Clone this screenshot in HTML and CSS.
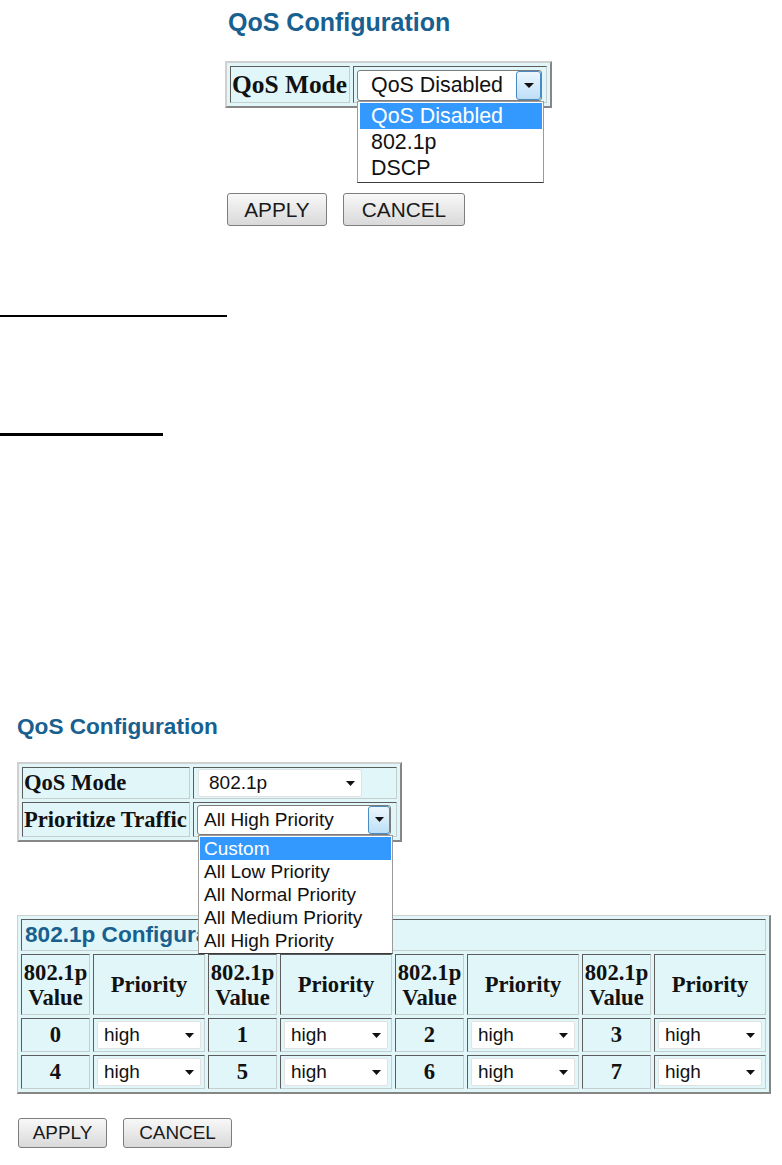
FILE: index.html
```
<!DOCTYPE html>
<html>
<head>
<meta charset="utf-8">
<title>QoS Configuration</title>
<link rel="stylesheet" href="styles.css">
</head>
<body>
<div class="page">
  <section class="shot shot-top">
    <h2 class="title title-lg">QoS Configuration</h2>
    <table class="cfg cfg-top">
      <tr>
        <td class="lbl lbl-lg c-mode">QoS Mode</td>
        <td class="val c-modeval">
          <div class="sel sel-open sel-lg">
            <span class="sel-text">QoS Disabled</span>
            <span class="sel-btn sel-btn-lg"><svg width="10" height="5" viewBox="0 0 10 5"><path d="M0 0h10L5 5z" fill="#111"/></svg></span>
            <ul class="list list-lg">
              <li class="hl">QoS Disabled</li>
              <li>802.1p</li>
              <li>DSCP</li>
            </ul>
          </div>
        </td>
      </tr>
    </table>
    <div class="btns btns-lg">
      <button class="btn b-apply-lg">APPLY</button>
      <button class="btn b-cancel-lg">CANCEL</button>
    </div>
  </section>

  <div class="rule rule-1"></div>
  <div class="rule rule-2"></div>

  <section class="shot shot-bottom">
    <h2 class="title title-md">QoS Configuration</h2>
    <table class="cfg cfg-mid">
      <tr>
        <td class="lbl lbl-md c-l1">QoS Mode</td>
        <td class="val c-v1">
          <div class="sel sel-closed sel-mode">
            <span class="sel-text">802.1p</span>
            <span class="arrow"><svg width="9" height="5" viewBox="0 0 9 5"><path d="M0 0h9L4.5 5z" fill="#111"/></svg></span>
          </div>
        </td>
      </tr>
      <tr>
        <td class="lbl lbl-md c-l2">Prioritize Traffic</td>
        <td class="val c-v2">
          <div class="sel sel-open sel-prio">
            <span class="sel-text">All High Priority</span>
            <span class="sel-btn sel-btn-md"><svg width="9" height="5" viewBox="0 0 9 5"><path d="M0 0h9L4.5 5z" fill="#111"/></svg></span>
            <ul class="list list-md">
              <li class="hl">Custom</li>
              <li>All Low Priority</li>
              <li>All Normal Priority</li>
              <li>All Medium Priority</li>
              <li>All High Priority</li>
            </ul>
          </div>
        </td>
      </tr>
    </table>

    <table class="cfg cfg-data">
      <tr>
        <td class="cap" colspan="8"><span class="cap-text">802.1p Configuration</span></td>
      </tr>
      <tr class="hdr">
        <td class="th c-num">802.1p<br>Value</td>
        <td class="th c-pri">Priority</td>
        <td class="th c-num">802.1p<br>Value</td>
        <td class="th c-pri">Priority</td>
        <td class="th c-num">802.1p<br>Value</td>
        <td class="th c-pri">Priority</td>
        <td class="th c-num">802.1p<br>Value</td>
        <td class="th c-pri">Priority</td>
      </tr>
      <tr class="drow">
        <td class="num">0</td>
        <td class="pri"><div class="sel sel-closed sel-high"><span class="sel-text">high</span><span class="arrow"><svg width="9" height="5" viewBox="0 0 9 5"><path d="M0 0h9L4.5 5z" fill="#111"/></svg></span></div></td>
        <td class="num">1</td>
        <td class="pri"><div class="sel sel-closed sel-high"><span class="sel-text">high</span><span class="arrow"><svg width="9" height="5" viewBox="0 0 9 5"><path d="M0 0h9L4.5 5z" fill="#111"/></svg></span></div></td>
        <td class="num">2</td>
        <td class="pri"><div class="sel sel-closed sel-high"><span class="sel-text">high</span><span class="arrow"><svg width="9" height="5" viewBox="0 0 9 5"><path d="M0 0h9L4.5 5z" fill="#111"/></svg></span></div></td>
        <td class="num">3</td>
        <td class="pri"><div class="sel sel-closed sel-high"><span class="sel-text">high</span><span class="arrow"><svg width="9" height="5" viewBox="0 0 9 5"><path d="M0 0h9L4.5 5z" fill="#111"/></svg></span></div></td>
      </tr>
      <tr class="drow">
        <td class="num">4</td>
        <td class="pri"><div class="sel sel-closed sel-high"><span class="sel-text">high</span><span class="arrow"><svg width="9" height="5" viewBox="0 0 9 5"><path d="M0 0h9L4.5 5z" fill="#111"/></svg></span></div></td>
        <td class="num">5</td>
        <td class="pri"><div class="sel sel-closed sel-high"><span class="sel-text">high</span><span class="arrow"><svg width="9" height="5" viewBox="0 0 9 5"><path d="M0 0h9L4.5 5z" fill="#111"/></svg></span></div></td>
        <td class="num">6</td>
        <td class="pri"><div class="sel sel-closed sel-high"><span class="sel-text">high</span><span class="arrow"><svg width="9" height="5" viewBox="0 0 9 5"><path d="M0 0h9L4.5 5z" fill="#111"/></svg></span></div></td>
        <td class="num">7</td>
        <td class="pri"><div class="sel sel-closed sel-high"><span class="sel-text">high</span><span class="arrow"><svg width="9" height="5" viewBox="0 0 9 5"><path d="M0 0h9L4.5 5z" fill="#111"/></svg></span></div></td>
      </tr>
    </table>

    <div class="btns btns-md">
      <button class="btn b-apply-md">APPLY</button>
      <button class="btn b-cancel-md">CANCEL</button>
    </div>
  </section>
</div>
</body>
</html>
```

FILE: styles.css
```
* { box-sizing: border-box; }
html, body { margin: 0; padding: 0; background: #fff; }
body { font-family: "Liberation Sans", Arial, sans-serif; color: #000; }

.page { display: flex; flex-direction: column; align-items: flex-start; }
.shot { display: flex; flex-direction: column; align-items: flex-start; }

/* ---------- titles ---------- */
.title {
  margin: 0;
  font-family: "Liberation Sans", Arial, sans-serif;
  font-weight: bold;
  color: #17608f;
  white-space: nowrap;
}
.title-lg { font-size: 25px; line-height: 30px; margin-left: 3px; margin-bottom: 24px; }
.title-md { font-size: 22.6px; line-height: 27px; margin-bottom: 22px; }

/* ---------- tables ---------- */
.cfg {
  border-collapse: separate;
  background: #e1f6f8;
  border-style: solid;
  border-color: #d0d0d0 #868686 #868686 #d0d0d0;
}
.cfg td {
  padding: 0;
  border: 1px solid;
  border-color: #5c5c5c #c6cfd0 #c6cfd0 #5c5c5c;
  background: #e1f6f8;
  vertical-align: middle;
}
.cfg .lbl {
  font-family: "Liberation Serif", "Times New Roman", serif;
  font-weight: bold;
  white-space: nowrap;
  color: #111;
}

/* top table */
.shot-top { margin-left: 225px; padding-top: 7px; }
.cfg-top { border-width: 2px; border-spacing: 3px; }
.cfg .lbl-lg { font-size: 25.4px; padding-left: 1px; }
.cfg .c-mode { width: 120px; height: 37px; }
.cfg .c-modeval { width: 194px; height: 37px; padding: 2px 3px 1px 3px; }

/* middle table */
.cfg-mid { border-width: 2px; border-spacing: 3px; }
.cfg .lbl-md { font-size: 22.6px; padding-left: 1px; }
.cfg .c-l1 { width: 168px; height: 32px; }
.cfg .c-l2 { width: 168px; height: 35px; }
.cfg .c-v1, .cfg .c-v2 { width: 204px; padding: 0 3px; }
.cfg .c-v1 { padding-left: 4px; }

/* data table */
.cfg-data {
  margin-top: 73px;
  border-width: 1px 2px 2px 1px;
  border-spacing: 3px;
}
.cfg .cap {
  height: 32px;
  padding-left: 3px;
  font-family: "Liberation Sans", Arial, sans-serif;
  font-weight: bold;
  font-size: 22.6px;
  color: #17608f;
  white-space: nowrap;
}
.cfg .th {
  height: 61px;
  text-align: center;
  font-family: "Liberation Serif", "Times New Roman", serif;
  font-weight: bold;
  font-size: 22.6px;
  line-height: 25px;
  color: #111;
}
.cfg .c-num { width: 69px; }
.cfg .c-pri { width: 111px; }
.cfg .num {
  height: 34px;
  text-align: center;
  font-family: "Liberation Serif", "Times New Roman", serif;
  font-weight: bold;
  font-size: 22.6px;
  color: #111;
}
.cfg .pri { height: 34px; padding: 0 3px; }

/* ---------- selects ---------- */
.sel {
  position: relative;
  display: flex;
  align-items: center;
  background: #fff;
  border: 1px solid #8a8a8a;
  border-radius: 3px;
  font-family: "Liberation Sans", Arial, sans-serif;
  color: #111;
}
.sel-text { flex: 1; white-space: nowrap; }
.sel-open { border-color: #7c7c7c; }
.sel-closed { border-color: #e2e2e2; border-radius: 2px; }

.sel-btn {
  align-self: stretch;
  display: flex;
  align-items: center;
  justify-content: center;
  border: 1px solid #4a8bc3;
  border-radius: 3px;
  background: linear-gradient(#edf6fd, #bddff7);
  margin: 0;
}
.sel-btn-lg { width: 25px; }
.sel-btn-md { width: 22px; }

.arrow { display: flex; align-items: center; }

.sel-lg { width: 185px; height: 31px; font-size: 21.4px; padding-left: 13px; }
.sel-mode { width: 164px; height: 28px; font-size: 19px; padding-left: 10px; padding-right: 6px; }
.sel-prio { width: 194px; height: 30px; font-size: 19px; padding-left: 6px; }
.sel-high { width: 104px; height: 28px; font-size: 19px; padding-left: 6px; padding-right: 6px; }

/* dropdown lists */
.list {
  position: absolute;
  z-index: 5;
  margin: 0;
  list-style: none;
  background: #fff;
  border: 1px solid #9a9a9a;
  border-bottom-color: #3a3a3a;
  color: #111;
}
.list li { white-space: nowrap; }
.list .hl { background: #3399ff; color: #fff; }

.list-lg {
  top: calc(100% + 1px);
  left: -1px;
  width: 187px;
  padding: 1px 1px 1px 2px;
}
.list-lg li { height: 26.3px; line-height: 26px; padding-left: 11px; font-size: 21.4px; }

.list-md {
  top: calc(100% + 1px);
  left: 0;
  width: 195px;
  padding: 1px;
}
.list-md li { height: 23px; line-height: 23px; padding-left: 4px; font-size: 19px; }

/* ---------- buttons ---------- */
.btns { display: flex; }
.btn {
  display: flex;
  align-items: center;
  justify-content: center;
  margin: 0;
  padding: 0;
  font-family: "Liberation Sans", Arial, sans-serif;
  color: #1a1a1a;
  border: 1px solid #7d7d7d;
  border-radius: 3px;
  background: linear-gradient(#f8f8f8, #d9d9d9);
}
.btns-lg { margin-top: 85px; margin-left: 2px; gap: 16px; }
.btns-lg .btn { height: 33px; font-size: 20.8px; }
.b-apply-lg { width: 100px; }
.b-cancel-lg { width: 122px; }

.btns-md { margin-top: 24px; margin-left: 1px; gap: 16px; }
.btns-md .btn { height: 30px; font-size: 18.9px; }
.b-apply-md { width: 89px; }
.b-cancel-md { width: 109px; }

/* ---------- rules ---------- */
.rule { background: #000; }
.rule-1 { width: 227px; height: 2px; margin-top: 89px; }
.rule-2 { width: 163px; height: 3px; margin-top: 116px; }

.shot-bottom { margin-left: 17px; margin-top: 277px; }
```
